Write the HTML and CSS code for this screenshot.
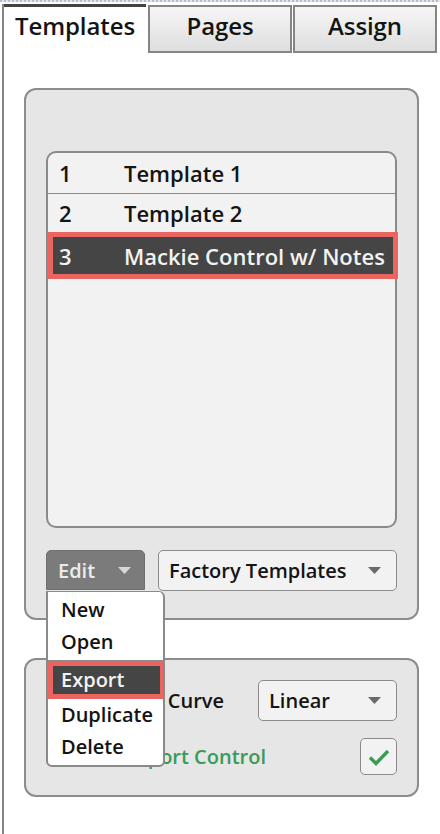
FILE: index.html
```html
<!DOCTYPE html>
<html>
<head>
<meta charset="utf-8">
<link rel="stylesheet" href="styles.css">
</head>
<body>
<div class="dots"></div>
<div class="window">
  <div class="tabs">
    <div class="tab active">Templates</div>
    <div class="tab">Pages</div>
    <div class="tab tab-last">Assign</div>
  </div>
  <div class="content">
    <section class="panel panel-main">
      <ul class="list">
        <li class="row row-first"><span class="num">1</span><span class="name">Template 1</span></li>
        <li class="row row-second"><span class="num">2</span><span class="name">Template 2</span></li>
        <li class="row selected"><span class="num">3</span><span class="name">Mackie Control w/ Notes</span></li>
      </ul>
      <div class="controls">
        <div class="edit-wrap">
          <div class="btn btn-edit"><span>Edit</span><svg class="tri" width="13" height="7" viewBox="0 0 13 7"><path d="M0 0H13L6.5 7Z" fill="#d8d8d8"/></svg></div>
          <ul class="menu">
            <li class="item">New</li>
            <li class="item">Open</li>
            <li class="sep"></li>
            <li class="item item-sel">Export</li>
            <li class="item">Duplicate</li>
            <li class="item">Delete</li>
          </ul>
        </div>
        <div class="btn btn-select btn-factory"><span>Factory Templates</span><svg class="tri" width="13" height="7" viewBox="0 0 13 7"><path d="M0 0H13L6.5 7Z" fill="#6a6a6a"/></svg></div>
      </div>
    </section>
    <section class="panel panel-opts">
      <div class="opt-row">
        <span class="opt-label">Velocity Curve</span>
        <div class="btn btn-select btn-linear"><span>Linear</span><svg class="tri" width="13" height="7" viewBox="0 0 13 7"><path d="M0 0H13L6.5 7Z" fill="#6a6a6a"/></svg></div>
      </div>
      <div class="opt-row opt-row-2">
        <span class="opt-label green">Transport Control</span>
        <span class="check"><svg width="24" height="20" viewBox="0 0 24 20"><path d="M3 10.5L9 16.5L21 4" fill="none" stroke="#3d9a55" stroke-width="3.4"/></svg></span>
      </div>
    </section>
  </div>
</div>
</body>
</html>
```

FILE: styles.css
```css
html, body {
  margin: 0;
  padding: 0;
  background: #ffffff;
}

body {
  font-family: "Open Sans", "DejaVu Sans", sans-serif;
  color: #141414;
  overflow: hidden;
}

.dots {
  height: 2px;
  background: repeating-linear-gradient(90deg, #b4bec8 0 2px, #e2e6ea 2px 4px);
}

.window {
  margin: 2px 0 0 2px;
  border-left: 2px solid #858585;
  height: 830px;
  box-sizing: border-box;
}

.tabs {
  display: flex;
  height: 49px;
  align-items: flex-start;
}

.tab {
  box-sizing: border-box;
  width: 144px;
  height: 48px;
  margin-top: 1px;
  margin-left: 2px;
  border: 2px solid #858585;
  background: linear-gradient(#f6f6f6, #dedede);
  font-size: 24px;
  font-weight: 600;
  line-height: 37px;
  text-align: center;
  letter-spacing: -0.1px;
}

.tab.active {
  width: 142px;
  height: 49px;
  margin: 0;
  border: none;
  border-top: 3px solid #444444;
  background: #ffffff;
  line-height: 38px;
}

.tab-last {
  margin-left: 1px;
}

.content {
  padding: 35px 21px 0 20px;
}

.panel {
  box-sizing: border-box;
  border: 2px solid #8c8c8c;
  border-radius: 12px;
  background: #e6e6e6;
}

.panel-main {
  height: 532px;
  padding: 61px 20px 0 20px;
}

.list {
  list-style: none;
  margin: 0;
  padding: 0;
  box-sizing: border-box;
  height: 377px;
  border: 2px solid #8a8a8a;
  border-radius: 10px;
  background: #f2f2f2;
}

.row {
  display: flex;
  align-items: center;
  height: 40px;
  padding-left: 11px;
  font-size: 22px;
  font-weight: 600;
}

.row-first {
  border-bottom: 1px solid #8a8a8a;
}

.row-second {
  height: 38px;
}

.row.selected {
  box-sizing: border-box;
  height: 47px;
  margin-right: -3px;
  padding-left: 6px;
  border: 5px solid #ea6560;
  background: #454545;
  color: #f2f2f2;
}

.num {
  width: 65px;
}

.controls {
  display: flex;
  gap: 13px;
  margin-top: 22px;
}

.edit-wrap {
  position: relative;
}

.btn {
  box-sizing: border-box;
  display: flex;
  align-items: center;
  justify-content: space-between;
  font-size: 20px;
  font-weight: 600;
  border-radius: 5px;
}

.btn-edit {
  width: 99px;
  height: 40px;
  padding: 0 13px 0 11px;
  background: #7b7b7b;
  border: 1px solid #6e6e6e;
  color: #ececec;
  border-radius: 5px 5px 0 0;
}

.btn-select {
  background: #f2f2f2;
  border: 1px solid #8a8a8a;
  padding: 0 15px 0 10px;
}

.btn-factory {
  width: 239px;
  height: 41px;
}

.tri {
  display: block;
}

.menu {
  position: absolute;
  z-index: 10;
  top: 41px;
  left: 0;
  box-sizing: border-box;
  width: 119px;
  height: 176px;
  margin: 0;
  padding: 2px 0 0 0;
  list-style: none;
  background: #ffffff;
  border: 2px solid #8a8a8a;
  border-top: 1px solid #8a8a8a;
  border-radius: 0 6px 6px 6px;
  font-size: 20px;
  font-weight: 600;
}

.item {
  height: 32px;
  line-height: 32px;
  padding-left: 13px;
}

.sep {
  height: 0;
  margin-top: 2px;
  border-top: 1px solid #8a8a8a;
}

.item.item-sel {
  box-sizing: border-box;
  height: 38px;
  line-height: 28px;
  padding-left: 8px;
  border-style: solid;
  border-color: #ea6560;
  border-width: 5px 3px 5px 5px;
  background: #454545;
  color: #f2f2f2;
}

.panel-opts {
  height: 139px;
  margin-top: 38px;
  padding: 20px 20px 0 20px;
}

.opt-row {
  display: flex;
  align-items: center;
}

.opt-label {
  flex: 1;
  text-align: right;
  padding-right: 34px;
  font-size: 20px;
  font-weight: 600;
}

.btn-linear {
  width: 139px;
  height: 41px;
}

.opt-row-2 {
  margin-top: 17px;
}

.opt-label.green {
  color: #3a9a5a;
  padding-right: 94px;
}

.check {
  box-sizing: border-box;
  width: 37px;
  height: 37px;
  border: 1px solid #8a8a8a;
  border-radius: 5px;
  background: #f2f2f2;
  display: flex;
  align-items: center;
  justify-content: center;
}
```
